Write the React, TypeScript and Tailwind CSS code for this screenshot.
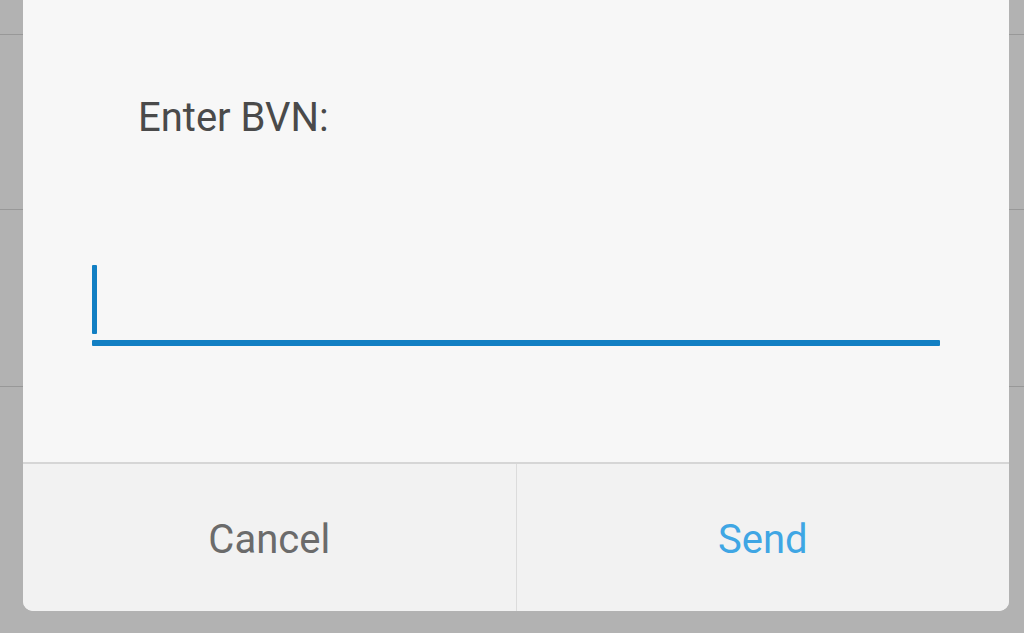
import React from "react";

export default function App() {
  return (
    <div
      className="relative w-[1024px] h-[633px] overflow-hidden bg-[#b2b2b2]"
      style={{ fontFamily: "Roboto, 'Noto Sans', sans-serif" }}
    >
      {/* background list rows */}
      <div className="flex flex-col">
        <div className="h-[35px] border-b border-[#989898]" />
        <div className="h-[175px] border-b border-[#989898]" />
        <div className="h-[177px] border-b border-[#989898]" />
      </div>

      {/* dialog overlay */}
      <div className="absolute left-[23px] top-0 w-[986px] h-[611px] rounded-b-[10px] overflow-hidden flex flex-col bg-[#f7f7f7]">
        <div className="h-[462px] flex flex-col">
          <div className="pt-[94px] pl-[115px] text-[40px] leading-[48px] text-[#4a4a4a]">
            Enter BVN:
          </div>
          <div className="mt-[123px] mx-[69px] flex flex-col">
            <div className="w-[5px] h-[69px] bg-[#127fc3] rounded-[1px]" />
            <div className="mt-[6px] h-[6px] bg-[#127fc3] rounded-[1px]" />
          </div>
        </div>
        <div className="flex-1 flex border-t-2 border-[#d6d6d6] bg-[#f2f2f2]">
          <div className="flex-1 flex items-center justify-center pt-[5px] text-[40px] leading-[48px] text-[#6b6b6b] border-r border-[#dcdcdc]">
            Cancel
          </div>
          <div className="flex-1 flex items-center justify-center pt-[5px] text-[40px] leading-[48px] text-[#3fa6e4]">
            Send
          </div>
        </div>
      </div>
    </div>
  );
}
